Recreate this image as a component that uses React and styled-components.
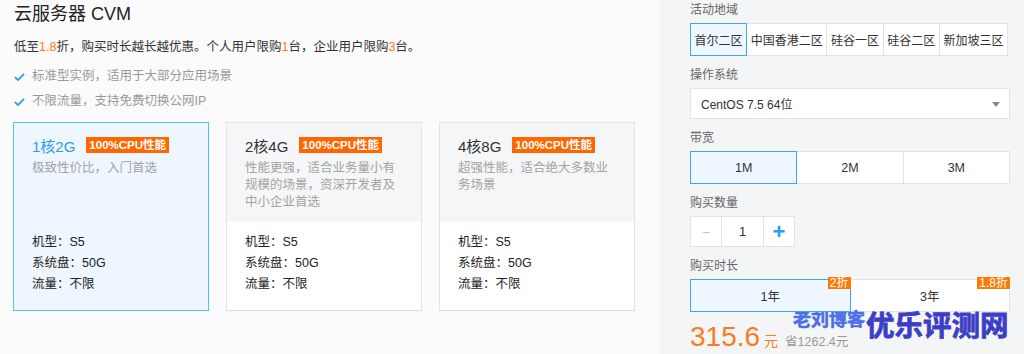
import React from "react";
import styled, { createGlobalStyle } from "styled-components";

const GlobalStyle = createGlobalStyle`
  html, body {
    margin: 0;
    padding: 0;
    background: #fbfbfc;
  }
  body {
    font-family: "Liberation Sans", "Noto Sans CJK SC", sans-serif;
    color: #333;
  }
`;

const plans = [
  {
    name: "1核2G",
    desc: ["极致性价比，入门首选"],
    active: true
  },
  {
    name: "2核4G",
    desc: ["性能更强，适合业务量小有", "规模的场景，资深开发者及", "中小企业首选"]
  },
  {
    name: "4核8G",
    desc: ["超强性能，适合绝大多数业", "务场景"]
  }
];

const regions = ["首尔二区", "中国香港二区", "硅谷一区", "硅谷二区", "新加坡三区"];

export default function App() {
  return (
    <>
      <GlobalStyle />
      <Page>
        <Left>
          <Title>云服务器 CVM</Title>
          <Subtitle>
            低至<Hl>1.8</Hl>折，购买时长越长越优惠。个人用户限购<Hl>1</Hl>台，企业用户限购<Hl>3</Hl>台。
          </Subtitle>
          <Features>
            <Feature>
              <CheckIcon />
              标准型实例，适用于大部分应用场景
            </Feature>
            <Feature>
              <CheckIcon />
              不限流量，支持免费切换公网IP
            </Feature>
          </Features>
          <CardRow>
            {plans.map((p) => (
              <Card key={p.name} $active={p.active}>
                <CardTop $active={p.active}>
                  <CardHead>
                    <CardName $active={p.active}>{p.name}</CardName>
                    <Badge>100%CPU性能</Badge>
                  </CardHead>
                  <CardDesc>
                    {p.desc.map((l) => (
                      <div key={l}>{l}</div>
                    ))}
                  </CardDesc>
                </CardTop>
                <CardSpecs>
                  <div>机型：S5</div>
                  <div>系统盘：50G</div>
                  <div>流量：不限</div>
                </CardSpecs>
              </Card>
            ))}
          </CardRow>
        </Left>

        <Right>
          <Field>
            <Label>活动地域</Label>
            <Segments>
              {regions.map((r, i) => (
                <RegionBtn key={r} $active={i === 0}>
                  {r}
                </RegionBtn>
              ))}
            </Segments>
          </Field>

          <Field>
            <Label>操作系统</Label>
            <Select>
              CentOS 7.5 64位
              <Caret />
            </Select>
          </Field>

          <Field>
            <Label>带宽</Label>
            <Segments>
              {["1M", "2M", "3M"].map((b, i) => (
                <WideBtn key={b} $active={i === 0}>
                  {b}
                </WideBtn>
              ))}
            </Segments>
          </Field>

          <Field>
            <Label>购买数量</Label>
            <Stepper>
              <StepBtn $tone="minus">−</StepBtn>
              <StepValue>1</StepValue>
              <StepBtn $tone="plus">+</StepBtn>
            </Stepper>
          </Field>

          <Field>
            <Label>购买时长</Label>
            <Segments>
              <WideBtn $active>
                1年
                <Discount>2折</Discount>
              </WideBtn>
              <WideBtn>
                3年
                <Discount>1.8折</Discount>
              </WideBtn>
            </Segments>
          </Field>

          <PriceRow>
            <Price>315.6</Price>
            <Unit>元</Unit>
            <Saved>省1262.4元</Saved>
          </PriceRow>

          <MarkSmall>老刘博客</MarkSmall>
          <MarkBig>优乐评测网</MarkBig>
        </Right>
      </Page>
    </>
  );
}

function CheckIcon() {
  return (
    <CheckSvg viewBox="0 0 12 10">
      <path d="M1 5.2 L4.3 8.3 L11 1.5" fill="none" stroke="#2b9cf2" strokeWidth="2" />
    </CheckSvg>
  );
}

const Page = styled.div`
  display: flex;
  width: 1024px;
  height: 354px;
  overflow: hidden;
`;

const Left = styled.div`
  width: 660px;
  flex-shrink: 0;
  padding: 0 0 0 14px;
  box-sizing: border-box;
  background: #fbfbfc;
`;

const Title = styled.div`
  font-size: 18px;
  line-height: 28px;
  color: #222;
`;

const Subtitle = styled.div`
  margin-top: 9px;
  font-size: 12.5px;
  line-height: 20px;
  color: #333;
`;

const Hl = styled.span`
  color: #ff7a1a;
`;

const Features = styled.div`
  margin-top: 7px;
`;

const Feature = styled.div`
  display: flex;
  align-items: center;
  font-size: 12.5px;
  line-height: 25px;
  color: #999;
`;

const CheckSvg = styled.svg`
  width: 11px;
  height: 10px;
  margin-right: 7px;
`;

const CardRow = styled.div`
  display: flex;
  gap: 17px;
  margin-top: 8px;
  margin-left: -1px;
`;

const Card = styled.div`
  width: 196px;
  height: 189px;
  box-sizing: border-box;
  display: flex;
  flex-direction: column;
  border: 1px solid ${(p) => (p.$active ? "#5cbaff" : "#e4e4e4")};
  border-bottom-color: ${(p) => (p.$active ? "#5cbaff" : "#dcdcdc")};
  background: ${(p) => (p.$active ? "#eef7ff" : "#fff")};
`;

const CardTop = styled.div`
  height: 99px;
  box-sizing: border-box;
  padding: 12px 18px 0;
  background: ${(p) => (p.$active ? "transparent" : "#f5f6f8")};
`;

const CardHead = styled.div`
  display: flex;
  align-items: center;
  height: 20px;
`;

const CardName = styled.span`
  font-size: 15px;
  color: ${(p) => (p.$active ? "#2a9bf3" : "#333")};
`;

const Badge = styled.span`
  margin-left: 11px;
  padding: 0 3px;
  height: 16px;
  line-height: 16px;
  font-size: 11.5px;
  font-weight: bold;
  color: #fff;
  background: #ff6600;
`;

const CardDesc = styled.div`
  margin-top: 5px;
  font-size: 12.5px;
  line-height: 17px;
  color: #a3a3a3;
`;

const CardSpecs = styled.div`
  padding: 10px 18px 0;
  font-size: 12.5px;
  line-height: 21px;
  color: #222;
`;

const Right = styled.div`
  position: relative;
  flex: 1;
  min-width: 0;
  padding: 0 14px 0 30px;
  background: #f4f5f7;
`;

const Field = styled.div`
  margin-bottom: 9px;
`;

const Label = styled.div`
  font-size: 12px;
  line-height: 20px;
  color: #666;
  margin-bottom: 3px;
`;

const Segments = styled.div`
  display: flex;
`;

const SegBase = styled.div`
  position: relative;
  height: 33px;
  box-sizing: border-box;
  display: flex;
  align-items: center;
  justify-content: center;
  white-space: nowrap;
  font-size: 12.5px;
  color: #333;
  background: ${(p) => (p.$active ? "#eef7ff" : "#fff")};
  border: 1px solid ${(p) => (p.$active ? "#3aa7f7" : "#e3e3e3")};
  z-index: ${(p) => (p.$active ? 1 : 0)};
  & + & {
    margin-left: -1px;
  }
`;

const RegionBtn = styled(SegBase)`
  flex-shrink: 0;
  padding: 0 3.6px;
  font-size: 12px;
`;

const WideBtn = styled(SegBase)`
  flex: 1;
`;

const Discount = styled.span`
  position: absolute;
  top: -3px;
  right: -1px;
  padding: 0 2px;
  line-height: 12px;
  font-size: 12px;
  color: #fff;
  background: #ff7a00;
`;

const Select = styled.div`
  position: relative;
  height: 31px;
  box-sizing: border-box;
  display: flex;
  align-items: center;
  padding: 0 10px;
  font-size: 12px;
  color: #333;
  background: #fff;
  border: 1px solid #e3e3e3;
`;

const Caret = styled.span`
  position: absolute;
  right: 9px;
  top: 13px;
  border-left: 4px solid transparent;
  border-right: 4px solid transparent;
  border-top: 5px solid #888;
`;

const Stepper = styled.div`
  display: flex;
  height: 31px;
`;

const StepCell = styled.div`
  height: 31px;
  box-sizing: border-box;
  display: flex;
  align-items: center;
  justify-content: center;
  background: #fff;
  border: 1px solid #e3e3e3;
  & + & {
    margin-left: -1px;
  }
`;

const StepBtn = styled(StepCell)`
  width: 32px;
  font-size: ${(p) => (p.$tone === "plus" ? "22px" : "14px")};
  font-weight: ${(p) => (p.$tone === "plus" ? "bold" : "normal")};
  color: ${(p) => (p.$tone === "plus" ? "#2b9cf2" : "#c0c0c0")};
`;

const StepValue = styled(StepCell)`
  width: 43px;
  font-size: 13px;
  color: #333;
`;

const PriceRow = styled.div`
  display: flex;
  align-items: baseline;
  margin-top: 9px;
`;

const Price = styled.span`
  font-size: 28px;
  line-height: 32px;
  color: #ff7a1a;
`;

const Unit = styled.span`
  margin-left: 4px;
  font-size: 14px;
  color: #ff7a1a;
`;

const Saved = styled.span`
  margin-left: 7px;
  font-size: 12.5px;
  color: #999;
`;

const MarkSmall = styled.span`
  position: absolute;
  left: 133px;
  top: 309px;
  font-size: 18px;
  line-height: 22px;
  font-weight: bold;
  color: #4d6fe6;
  -webkit-text-stroke: 0.6px #4d6fe6;
  text-shadow: 0 0 2px #fff;
`;

const MarkBig = styled.span`
  position: absolute;
  left: 206px;
  top: 308px;
  font-size: 28.5px;
  line-height: 36px;
  font-weight: bold;
  color: #3b3fc6;
  -webkit-text-stroke: 0.8px #3b3fc6;
  text-shadow: 0 0 2px #fff, 0 0 2px #fff;
`;
